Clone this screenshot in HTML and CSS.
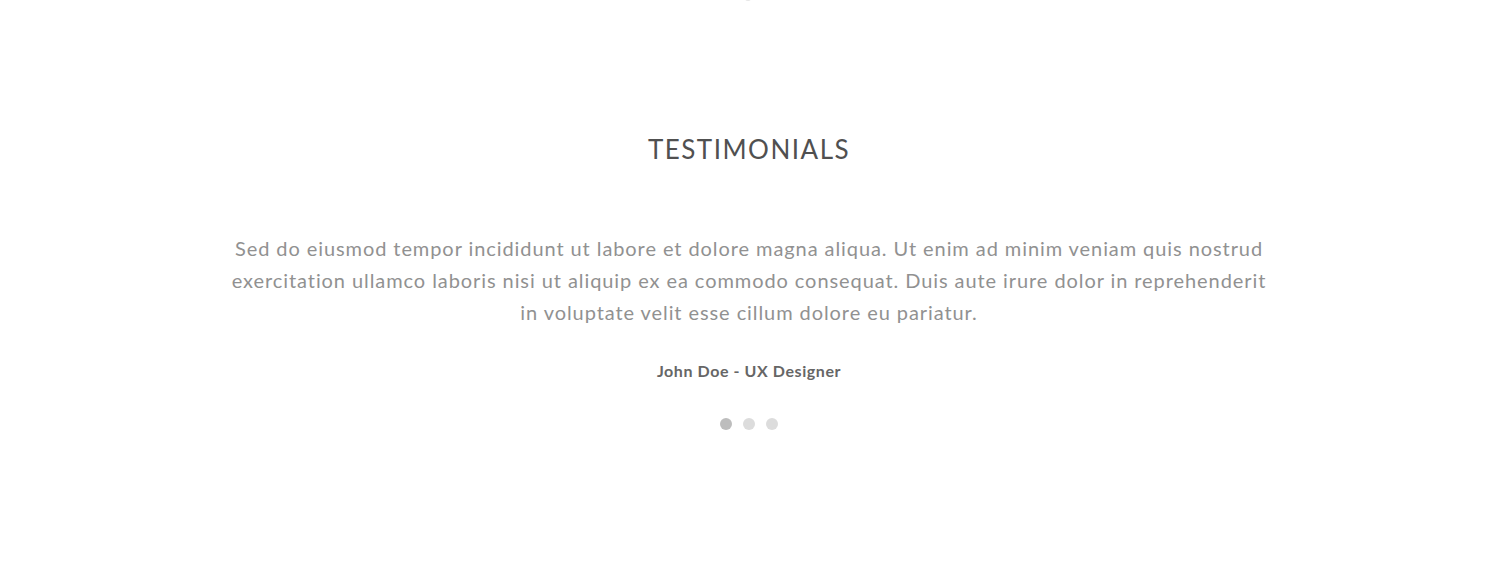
FILE: index.html
```html
<!DOCTYPE html>
<html lang="en">
<head>
<meta charset="utf-8">
<title>Testimonials</title>
<link rel="stylesheet" href="styles.css">
</head>
<body>
<div class="top-mark"></div>
<section class="testimonials">
  <h2 class="title">TESTIMONIALS</h2>
  <p class="quote">Sed do eiusmod tempor incididunt ut labore et dolore magna aliqua. Ut enim ad minim veniam quis nostrud exercitation ullamco laboris nisi ut aliquip ex ea commodo consequat. Duis aute irure dolor in reprehenderit in voluptate velit esse cillum dolore eu pariatur.</p>
  <p class="author">John Doe - UX Designer</p>
  <div class="dots">
    <span class="dot active"></span>
    <span class="dot"></span>
    <span class="dot"></span>
  </div>
</section>
</body>
</html>
```

FILE: styles.css
```css
html, body {
  margin: 0;
  padding: 0;
  background: #fff;
  font-family: Lato, "Open Sans", sans-serif;
}
.top-mark {
  position: absolute;
  left: 745px;
  top: -4px;
  width: 6px;
  height: 5px;
  border-radius: 50%;
  background: #e6e6e6;
}
.testimonials {
  display: flex;
  flex-direction: column;
  align-items: center;
  padding-top: 131px;
}
.title {
  margin: 0;
  font-size: 26px;
  font-weight: 400;
  letter-spacing: 1.5px;
  color: #505050;
  line-height: 36px;
}
.quote {
  margin: 65px 0 0;
  width: 1048px;
  text-align: center;
  font-size: 20px;
  line-height: 32px;
  letter-spacing: 0.92px;
  color: #919191;
}
.author {
  margin: 32px 0 0;
  font-size: 16px;
  font-weight: 700;
  color: #666;
  line-height: 22px;
  letter-spacing: 0.58px;
}
.dots {
  display: flex;
  gap: 11px;
  margin-top: 36px;
}
.dot {
  width: 12px;
  height: 12px;
  border-radius: 50%;
  background: #dcdcdc;
}
.dot.active {
  background: #bdbdbd;
}
```
